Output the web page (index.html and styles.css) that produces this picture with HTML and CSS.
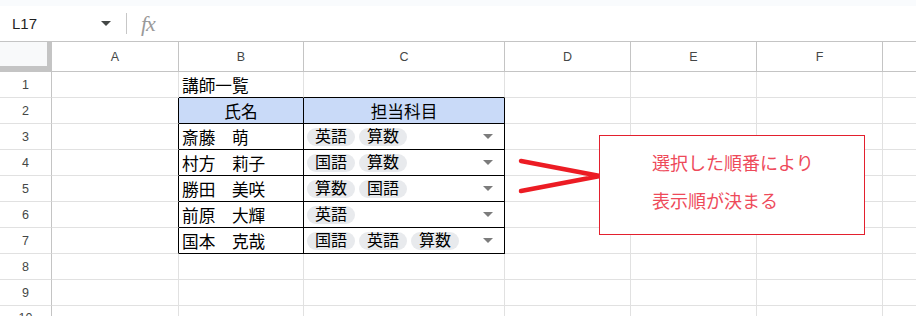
FILE: index.html
```html
<!DOCTYPE html>
<html lang="ja">
<head>
<meta charset="utf-8">
<title>講師一覧</title>
<link rel="stylesheet" href="styles.css">
</head>
<body>
<div class="app">
  <div class="topstrip"></div>
  <div class="fbar">
    <div class="namebox"><span class="ref">L17</span><span class="nb-arrow"></span></div>
    <div class="fdiv"></div>
    <div class="fx">fx</div>
  </div>
  <div class="sheet">
    <div class="c corner"></div>
    <div class="c ch">A</div>
    <div class="c ch">B</div>
    <div class="c ch">C</div>
    <div class="c ch">D</div>
    <div class="c ch">E</div>
    <div class="c ch">F</div>
    <div class="c ch last"></div>

    <div class="c rh">1</div>
    <div class="c"></div>
    <div class="c txt bb">講師一覧</div>
    <div class="c bb"></div>
    <div class="c"></div><div class="c"></div><div class="c"></div><div class="c last"></div>

    <div class="c rh">2</div>
    <div class="c br"></div>
    <div class="c txt ctr hdr tb">氏名</div>
    <div class="c txt ctr hdr tb">担当科目</div>
    <div class="c"></div><div class="c"></div><div class="c"></div><div class="c last"></div>

    <div class="c rh">3</div>
    <div class="c br"></div>
    <div class="c txt tb">斎藤　萌</div>
    <div class="c tb chips"><span class="chip">英語</span><span class="chip">算数</span><span class="dd"></span></div>
    <div class="c"></div><div class="c"></div><div class="c"></div><div class="c last"></div>

    <div class="c rh">4</div>
    <div class="c br"></div>
    <div class="c txt tb">村方　莉子</div>
    <div class="c tb chips"><span class="chip">国語</span><span class="chip">算数</span><span class="dd"></span></div>
    <div class="c"></div><div class="c"></div><div class="c"></div><div class="c last"></div>

    <div class="c rh">5</div>
    <div class="c br"></div>
    <div class="c txt tb">勝田　美咲</div>
    <div class="c tb chips"><span class="chip">算数</span><span class="chip">国語</span><span class="dd"></span></div>
    <div class="c"></div><div class="c"></div><div class="c"></div><div class="c last"></div>

    <div class="c rh">6</div>
    <div class="c br"></div>
    <div class="c txt tb">前原　大輝</div>
    <div class="c tb chips"><span class="chip">英語</span><span class="dd"></span></div>
    <div class="c"></div><div class="c"></div><div class="c"></div><div class="c last"></div>

    <div class="c rh">7</div>
    <div class="c br"></div>
    <div class="c txt tb">国本　克哉</div>
    <div class="c tb chips"><span class="chip">国語</span><span class="chip">英語</span><span class="chip">算数</span><span class="dd"></span></div>
    <div class="c"></div><div class="c"></div><div class="c"></div><div class="c last"></div>

    <div class="c rh">8</div>
    <div class="c"></div><div class="c"></div><div class="c"></div>
    <div class="c"></div><div class="c"></div><div class="c"></div><div class="c last"></div>

    <div class="c rh">9</div>
    <div class="c"></div><div class="c"></div><div class="c"></div>
    <div class="c"></div><div class="c"></div><div class="c"></div><div class="c last"></div>

    <div class="c rh r10">10</div>
    <div class="c"></div><div class="c"></div><div class="c"></div>
    <div class="c"></div><div class="c"></div><div class="c"></div><div class="c last"></div>
  </div>

  <svg class="arrows" width="916" height="316" viewBox="0 0 916 316" aria-hidden="true">
    <path d="M521 161 L600 176 M521 191 L600 176" fill="none" stroke="#ec1c24" stroke-width="4.5" stroke-linecap="round" stroke-linejoin="round"/>
  </svg>
  <div class="callout">
    <p>選択した順番により</p>
    <p>表示順が決まる</p>
  </div>
</div>
</body>
</html>
```

FILE: styles.css
```css
* { box-sizing: border-box; }
html, body { margin: 0; padding: 0; background: #fff; }
body {
  font-family: "Liberation Sans", Arial, "Noto Sans CJK JP", sans-serif;
  color: #000;
  width: 916px;
  height: 316px;
  overflow: hidden;
}
.app { position: relative; width: 916px; height: 316px; overflow: hidden; }

.topstrip { height: 6px; background: #f9fbfd; }

.fbar {
  height: 35px;
  display: flex;
  align-items: center;
  background: #fff;
}
.namebox {
  width: 126px;
  display: flex;
  align-items: center;
  padding-left: 12px;
  padding-right: 15px;
}
.ref { font-size: 15px; color: #1f1f1f; flex: 1; }
.nb-arrow {
  width: 0; height: 0;
  border-left: 5px solid transparent;
  border-right: 5px solid transparent;
  border-top: 5px solid #444746;
}
.fdiv { width: 1px; height: 21px; background: #c7c7c7; }
.fx {
  margin-left: 14px;
  font-family: "Liberation Serif", "Times New Roman", serif;
  font-style: italic;
  font-size: 22px;
  line-height: 22px;
  color: #9a9a9a;
  letter-spacing: -1px;
}

.sheet {
  display: grid;
  grid-template-columns: 52px 127px 125px 201px 126px 126px 126px 1fr;
  grid-template-rows: 31px repeat(10, 26px);
}
.c {
  border-right: 1px solid #e1e1e1;
  border-bottom: 1px solid #e1e1e1;
  font-size: 16.67px;
  display: flex;
  align-items: center;
  min-width: 0;
  white-space: nowrap;
  overflow: hidden;
}
.c.last { border-right: none; }
.corner {
  background: #f8f9fa;
  border-top: 1px solid #c4c4c4;
  border-right: 5px solid #c4c4c4;
  border-bottom: 6px solid #c4c4c4;
}
.ch {
  border-top: 1px solid #c4c4c4;
  border-bottom: 1px solid #c4c4c4;
  border-right-color: #c4c4c4;
  justify-content: center;
  font-size: 12.5px;
  color: #444746;
  padding-top: 1px;
}
.rh {
  border-right-color: #c4c4c4;
  justify-content: center;
  align-items: center;
  font-size: 12.5px;
  color: #444746;
}
.rh.r10 { align-items: flex-start; padding-top: 5px; }
.txt { padding-left: 3px; padding-top: 1px; }
.ctr { justify-content: center; padding-left: 0; }
.hdr { background: #c9daf8; }
.bb { border-bottom-color: #000; }
.br { border-right-color: #000; }
.tb { border-right-color: #000; border-bottom-color: #000; }

.chips { padding-left: 3px; gap: 4px; }
.chip {
  display: inline-block;
  height: 18px;
  line-height: 18px;
  padding: 0 8px;
  border-radius: 9px;
  background: #e8eaed;
  font-size: 16px;
  color: #000;
}
.dd {
  margin-left: auto;
  margin-right: 11px;
  width: 0; height: 0;
  border-left: 5px solid transparent;
  border-right: 5px solid transparent;
  border-top: 5px solid #7c7c7c;
}

.arrows { position: absolute; left: 0; top: 0; pointer-events: none; }

.callout {
  position: absolute;
  left: 599px;
  top: 135px;
  width: 266px;
  height: 100px;
  border: 1px solid #e3202e;
  background: #fff;
  padding: 7px 0 0 52px;
  color: #ee4a5a;
  font-family: "Noto Sans CJK JP", sans-serif;
  font-size: 18px;
}
.callout p { margin: 0; line-height: 38px; }
```
